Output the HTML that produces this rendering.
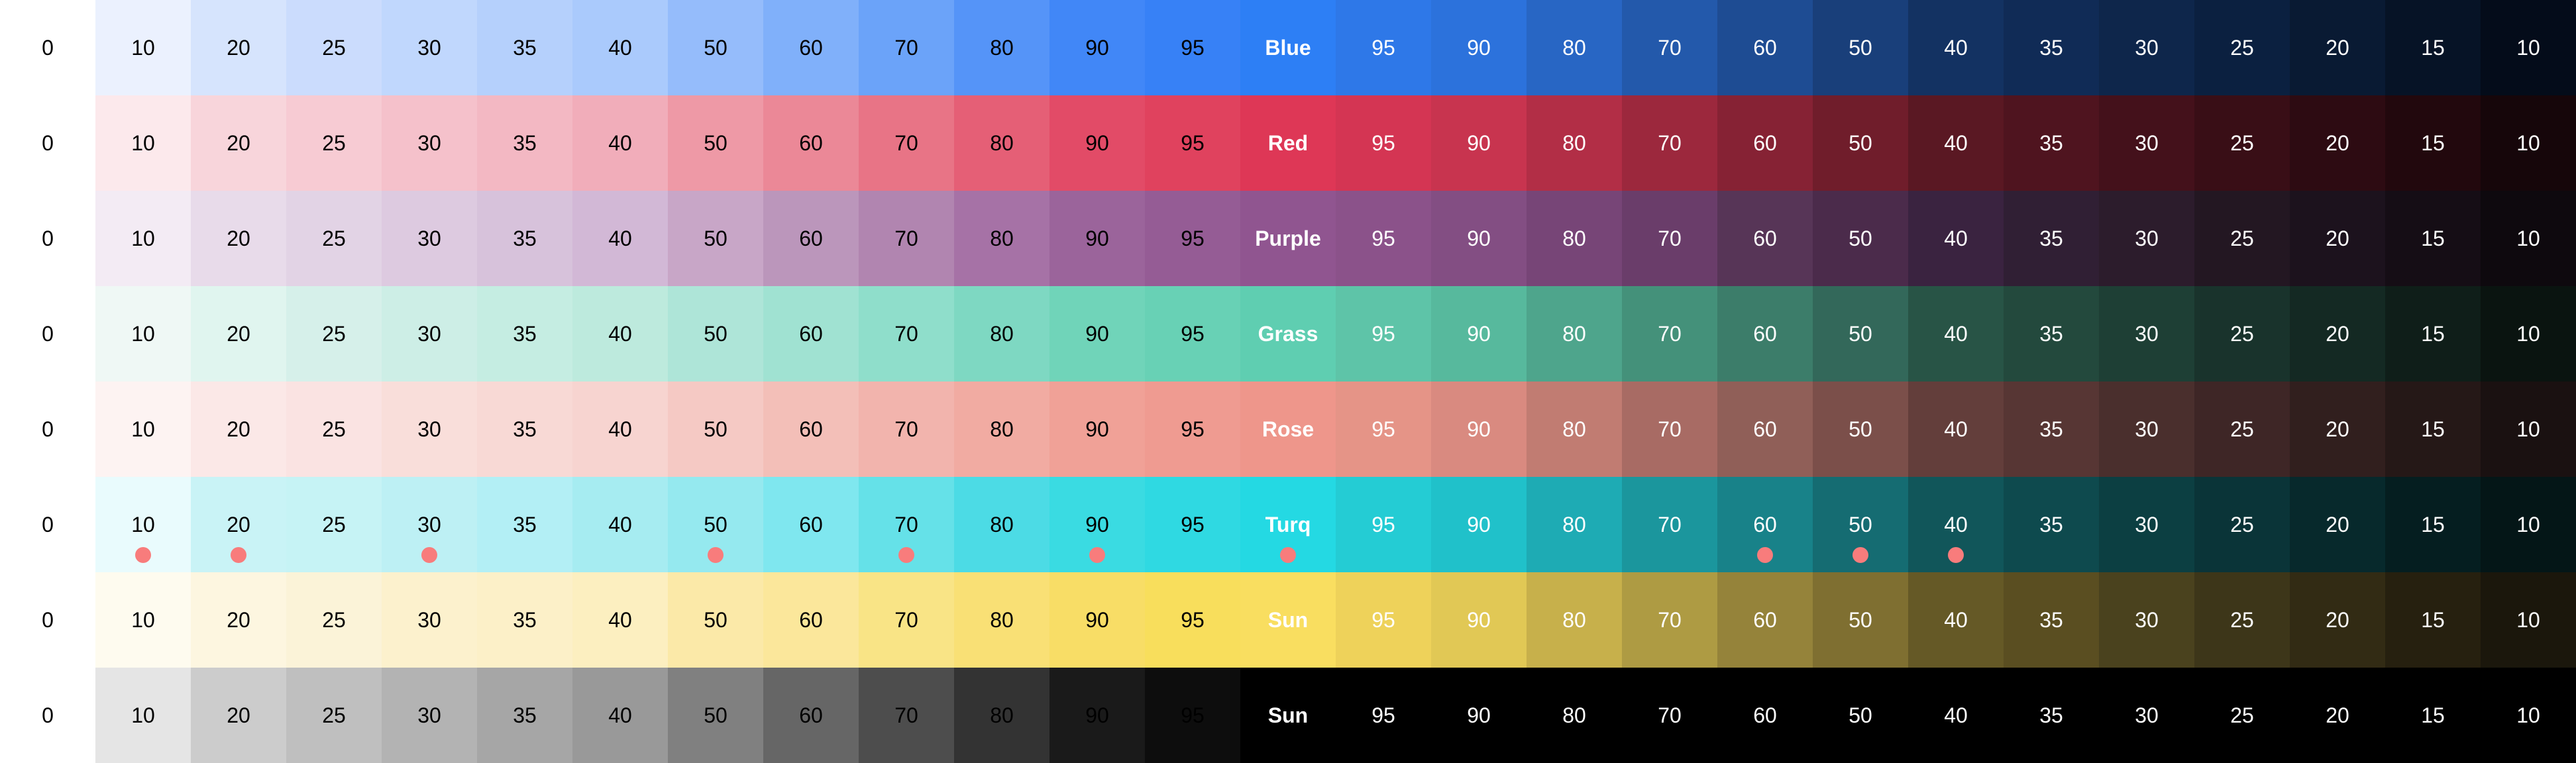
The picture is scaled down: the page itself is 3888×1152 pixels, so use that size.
<!DOCTYPE html>
<html><head><meta charset="utf-8"><style>
*{margin:0;padding:0;box-sizing:border-box}
body{width:3888px;height:1152px;overflow:hidden;background:#fff;font-family:"Liberation Sans",sans-serif}
.r{display:flex;height:144px;position:relative}
.r div{width:144px;height:144px;display:flex;align-items:center;justify-content:center;font-size:32px;color:#000;flex:none;position:relative}
.r div.l{color:#fff;font-weight:bold}
.r div.d{color:#fff}
.r div.l~div{color:#fff}
.dot{position:absolute;width:24px;height:24px;border-radius:50%;background:#f87c7c;top:106px}
</style></head><body>
<div class="r"><div style="background:#fff">0</div><div style="background:#ebf1fe">10</div><div style="background:#d6e4fd">20</div><div style="background:#cbdcfd">25</div><div style="background:#c0d7fd">30</div><div style="background:#b5d0fc">35</div><div style="background:#aacafc">40</div><div style="background:#95bcfb">50</div><div style="background:#80b0fa">60</div><div style="background:#6ba3f9">70</div><div style="background:#5594f8">80</div><div style="background:#4187f7">90</div><div style="background:#3781f6">95</div><div class="l" style="background:#2d7ff5">Blue</div><div style="background:#2e78e8">95</div><div style="background:#2c72dc">90</div><div style="background:#2866c4">80</div><div style="background:#2359ab">70</div><div style="background:#1e4c93">60</div><div style="background:#193f7a">50</div><div style="background:#133262">40</div><div style="background:#102b56">35</div><div style="background:#0e264b">30</div><div style="background:#0b2040">25</div><div style="background:#091a33">20</div><div style="background:#061326">15</div><div style="background:#040c1a">10</div></div>
<div class="r"><div style="background:#fff">0</div><div style="background:#fce9ec">10</div><div style="background:#f8d5db">20</div><div style="background:#f7cbd3">25</div><div style="background:#f5c1cb">30</div><div style="background:#f3b8c3">35</div><div style="background:#f1adba">40</div><div style="background:#ee99a6">50</div><div style="background:#eb8897">60</div><div style="background:#e87486">70</div><div style="background:#e55f76">80</div><div style="background:#e24b67">90</div><div style="background:#e0425e">95</div><div class="l" style="background:#de3756">Red</div><div style="background:#d43553">95</div><div style="background:#c8344f">90</div><div style="background:#b22e46">80</div><div style="background:#9c283d">70</div><div style="background:#862234">60</div><div style="background:#701d2b">50</div><div style="background:#5a1823">40</div><div style="background:#4f141f">35</div><div style="background:#44111b">30</div><div style="background:#390e16">25</div><div style="background:#2d0b12">20</div><div style="background:#22080d">15</div><div style="background:#16060a">10</div></div>
<div class="r"><div style="background:#fff">0</div><div style="background:#f3ebf4">10</div><div style="background:#e8dbea">20</div><div style="background:#e2d3e5">25</div><div style="background:#ddcae0">30</div><div style="background:#d7c2db">35</div><div style="background:#d2b8d6">40</div><div style="background:#c8a6c7">50</div><div style="background:#bb96bb">60</div><div style="background:#b185b0">70</div><div style="background:#a672a6">80</div><div style="background:#9b649b">90</div><div style="background:#955c95">95</div><div class="l" style="background:#905590">Purple</div><div style="background:#8b528a">95</div><div style="background:#834e83">90</div><div style="background:#774577">80</div><div style="background:#6a3d6a">70</div><div style="background:#573557">60</div><div style="background:#4b2b4b">50</div><div style="background:#3a2340">40</div><div style="background:#301f34">35</div><div style="background:#2c1c2c">30</div><div style="background:#231722">25</div><div style="background:#1c121d">20</div><div style="background:#150d15">15</div><div style="background:#0e090e">10</div></div>
<div class="r"><div style="background:#fff">0</div><div style="background:#eff8f5">10</div><div style="background:#e0f5ef">20</div><div style="background:#d6f0ea">25</div><div style="background:#cdeee6">30</div><div style="background:#c5ede2">35</div><div style="background:#bdeadd">40</div><div style="background:#aee5d8">50</div><div style="background:#a0e2d2">60</div><div style="background:#8fdecb">70</div><div style="background:#7ed8c2">80</div><div style="background:#70d4b9">90</div><div style="background:#68d1b5">95</div><div class="l" style="background:#5fceb1">Grass</div><div style="background:#5ec4a8">95</div><div style="background:#57b99d">90</div><div style="background:#4ea58c">80</div><div style="background:#44917a">70</div><div style="background:#3c7d6a">60</div><div style="background:#33685a">50</div><div style="background:#285446">40</div><div style="background:#23493d">35</div><div style="background:#1e3f35">30</div><div style="background:#19332c">25</div><div style="background:#142923">20</div><div style="background:#0f1e19">15</div><div style="background:#0a1410">10</div></div>
<div class="r"><div style="background:#fff">0</div><div style="background:#fdf3f2">10</div><div style="background:#fbe8e7">20</div><div style="background:#fae3e2">25</div><div style="background:#f9deda">30</div><div style="background:#f8d9d5">35</div><div style="background:#f7d4d0">40</div><div style="background:#f5c9c4">50</div><div style="background:#f3bfb8">60</div><div style="background:#f2b4ad">70</div><div style="background:#f1aba2">80</div><div style="background:#f0a197">90</div><div style="background:#ef9b91">95</div><div class="l" style="background:#ee968b">Rose</div><div style="background:#e59487">95</div><div style="background:#d98a80">90</div><div style="background:#c17c72">80</div><div style="background:#a86b64">70</div><div style="background:#905f58">60</div><div style="background:#7b4f4a">50</div><div style="background:#633e3b">40</div><div style="background:#573634">35</div><div style="background:#4a2f2d">30</div><div style="background:#3e2626">25</div><div style="background:#311f1e">20</div><div style="background:#251817">15</div><div style="background:#1a1111">10</div></div>
<div class="r"><div style="background:#fff">0</div><div style="background:#e9fbfd">10<span class="dot"></span></div><div style="background:#c9f3f6">20<span class="dot"></span></div><div style="background:#c6f3f5">25</div><div style="background:#bdf0f4">30<span class="dot"></span></div><div style="background:#b3eff5">35</div><div style="background:#a6ecf1">40</div><div style="background:#95e9ef">50<span class="dot"></span></div><div style="background:#7fe7ef">60</div><div style="background:#65e1e8">70<span class="dot"></span></div><div style="background:#4cdbe5">80</div><div style="background:#3adbe2">90<span class="dot"></span></div><div style="background:#2fd9e2">95</div><div class="l" style="background:#24d9e3">Turq<span class="dot"></span></div><div style="background:#24ccd4">95</div><div style="background:#20c1ca">90</div><div style="background:#1eabb4">80</div><div style="background:#1b969d">70</div><div style="background:#188289">60<span class="dot"></span></div><div style="background:#156c72">50<span class="dot"></span></div><div style="background:#11565a">40<span class="dot"></span></div><div style="background:#0e4a4e">35</div><div style="background:#0c3f42">30</div><div style="background:#0a3438">25</div><div style="background:#07292c">20</div><div style="background:#051e20">15</div><div style="background:#041617">10</div></div>
<div class="r"><div style="background:#fff">0</div><div style="background:#fefbef">10</div><div style="background:#fdf6e0">20</div><div style="background:#fbf3d8">25</div><div style="background:#fcf1cd">30</div><div style="background:#fcf0c8">35</div><div style="background:#fcefc0">40</div><div style="background:#fbe9a8">50</div><div style="background:#fbe79b">60</div><div style="background:#f9e486">70</div><div style="background:#f9e075">80</div><div style="background:#f8dd66">90</div><div style="background:#f8de5c">95</div><div class="l" style="background:#f9de60">Sun</div><div style="background:#eed25a">95</div><div style="background:#e1c855">90</div><div style="background:#c7b04b">80</div><div style="background:#ae9b43">70</div><div style="background:#95833a">60</div><div style="background:#7f6f31">50</div><div style="background:#655926">40</div><div style="background:#5a4e21">35</div><div style="background:#4a421e">30</div><div style="background:#3d3619">25</div><div style="background:#322b14">20</div><div style="background:#26200f">15</div><div style="background:#1b170c">10</div></div>
<div class="r"><div style="background:#fff">0</div><div style="background:#e5e5e5">10</div><div style="background:#cccccc">20</div><div style="background:#bfbfbf">25</div><div style="background:#b3b3b3">30</div><div style="background:#a6a6a6">35</div><div style="background:#999999">40</div><div style="background:#808080">50</div><div style="background:#666666">60</div><div style="background:#4d4d4d">70</div><div style="background:#333333">80</div><div style="background:#1a1a1a">90</div><div style="background:#0d0d0d">95</div><div class="l" style="background:#000">Sun</div><div style="background:#000">95</div><div style="background:#000">90</div><div style="background:#000">80</div><div style="background:#000">70</div><div style="background:#000">60</div><div style="background:#000">50</div><div style="background:#000">40</div><div style="background:#000">35</div><div style="background:#000">30</div><div style="background:#000">25</div><div style="background:#000">20</div><div style="background:#000">15</div><div style="background:#000">10</div></div>
</body></html>
